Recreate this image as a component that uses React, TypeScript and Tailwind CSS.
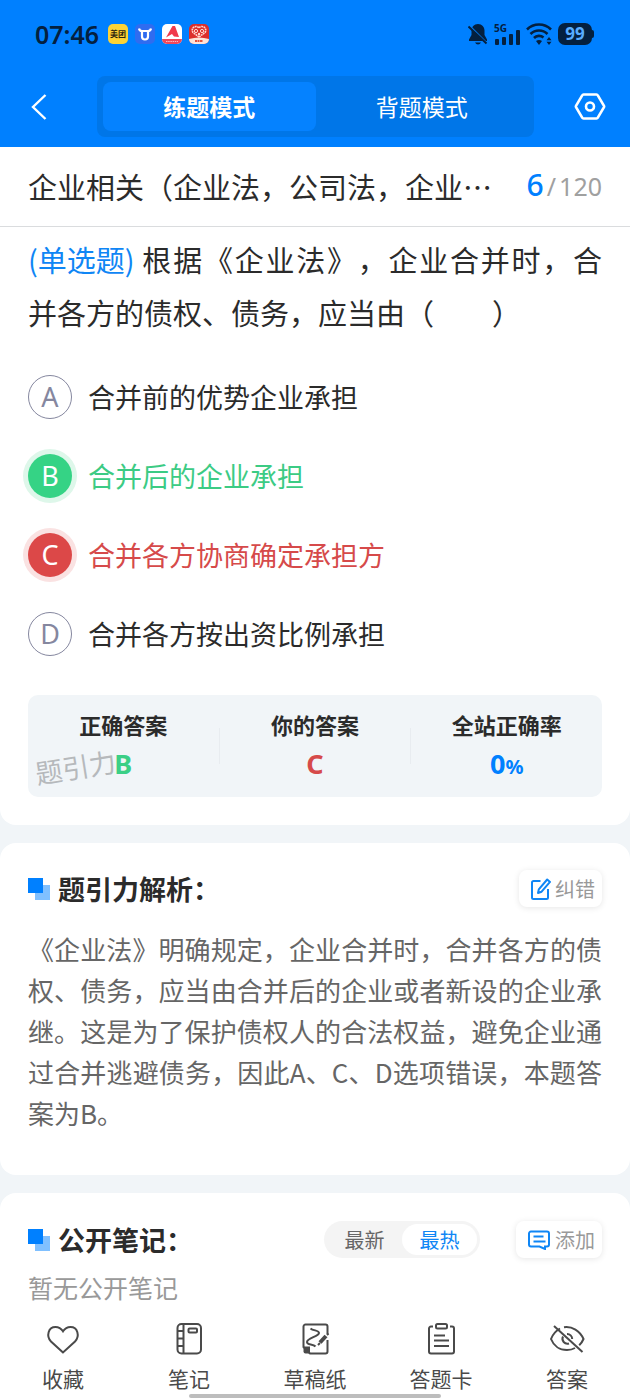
import React from "react";

const options = [
  { key: "A", text: "合并前的优势企业承担", state: "idle" },
  { key: "B", text: "合并后的企业承担", state: "right" },
  { key: "C", text: "合并各方协商确定承担方", state: "wrong" },
  { key: "D", text: "合并各方按出资比例承担", state: "idle" },
];

const circleStyles: Record<string, string> = {
  idle: "border border-[#85879f] text-[#85879f]",
  right: "bg-[#35d385] text-white ring-5 ring-[#def7ea]",
  wrong: "bg-[#dc4848] text-white ring-5 ring-[#fae2e2]",
};

const textStyles: Record<string, string> = {
  idle: "text-[#2b2b2b]",
  right: "text-[#3ccb84]",
  wrong: "text-[#d64a4a]",
};

const StatusBar = () => {
  return (
    <div className="flex items-center justify-between h-[68px] pl-[35px] pr-9 text-[#04203f]">
      <div className="flex items-center gap-[7px]">
        <span className="mr-[2px] font-['Noto_Sans',sans-serif] font-semibold text-[25px] leading-[30px]">
          07:46
        </span>
        <span className="flex items-center justify-center w-5 h-5 rounded-[5px] bg-[#fdd335] text-[8px] leading-[10px] font-bold text-[#2b2410]">
          美团
        </span>
        <svg className="w-5 h-5" viewBox="0 0 20 20" fill="none">
          <rect width="20" height="20" rx="5" fill="#2f6cf0" />
          <path
            d="M7 7v5.500a3 3 0 0 0 6 0V7M4 4.500q0.500 2.500 3 2.500h6q2.500 0 3-2.500"
            stroke="#fff"
            strokeWidth="2.200"
          />
        </svg>
        <svg className="w-5 h-5" viewBox="0 0 20 20" fill="none">
          <rect width="20" height="20" rx="5" fill="#fff" />
          <path d="M0 15h20a5 5 0 0 1-5 5H5a5 5 0 0 1-5-5z" fill="#f0485a" />
          <path d="M10.500 2L4 13.500l6-3.500 2 2.500 5 0.500L13 2z" fill="#f03a4c" />
          <path d="M4 17.500h12" stroke="#fbb8c0" strokeDasharray="1.500 0.700" />
        </svg>
        <svg className="w-5 h-5" viewBox="0 0 20 20" fill="none">
          <rect width="20" height="20" rx="5" fill="#dc2f2c" />
          <path d="M0 15q10-3 20 0a5 5 0 0 1-5 5H5a5 5 0 0 1-5-5z" fill="#fde3d8" />
          <path
            d="M10 13L4 8.500a3.200 3.200 0 0 1 6-4.500 3.200 3.200 0 0 1 6 4.500z"
            stroke="#ffd9d2"
            strokeWidth="1.600"
            strokeDasharray="1.800 0.600"
          />
          <circle cx="7" cy="7" r="1.600" stroke="#ffd9d2" />
          <circle cx="13" cy="7" r="1.600" stroke="#ffd9d2" />
          <circle cx="10" cy="10" r="1.200" fill="#ffd9d2" />
          <path d="M6 17h8" stroke="#e0533f" strokeWidth="2" strokeDasharray="2 0.500" />
        </svg>
      </div>
      <div className="flex items-center gap-[6px]">
        <svg className="w-5 h-[22px]" viewBox="0 0 20 22" fill="none">
          <path
            d="M10 1c-4 0-6.500 3-6.500 6.500v4.500L1 16.500V18h18v-1.500L16.500 12V7.500C16.500 4 14 1 10 1z"
            fill="currentColor"
          />
          <path d="M7 19.500h6q-1 2-3 2t-3-2z" fill="currentColor" />
          <path d="M0 1.500l19 19" stroke="#0080ff" strokeWidth="2" />
          <path d="M0.500 3.500l18 17" stroke="currentColor" strokeWidth="2" />
        </svg>
        <div className="relative flex items-end justify-end gap-[3px] w-[26px] h-[22px]">
          <span className="absolute left-0 top-0 font-['Noto_Sans',sans-serif] font-bold text-[10px] leading-[10px]">
            5G
          </span>
          <span className="w-1 h-[6px] rounded-[1px] bg-[#04203f]" />
          <span className="w-1 h-2 rounded-[1px] bg-[#04203f]" />
          <span className="w-1 h-[11px] rounded-[1px] bg-[#04203f]" />
          <span className="w-1 h-[15px] rounded-[1px] bg-[#04203f]" />
        </div>
        <svg className="w-[26px] h-[22px]" viewBox="0 0 26 22" fill="none">
          <path
            d="M1 6.500a17 17 0 0 1 24 0M4.500 11a12 12 0 0 1 17 0M8 15a7 7 0 0 1 9.500-0.500"
            stroke="currentColor"
            strokeWidth="2.600"
          />
          <path d="M10 18q3-2 6 0l-3 4z" fill="currentColor" />
          <path d="M23 14l2.500 3.200h-5zM23 22l2.500-3.200h-5z" fill="currentColor" />
        </svg>
        <div className="flex items-center">
          <span className="flex items-center justify-center w-[34px] h-[22px] rounded-[7px] bg-[#04203f] font-['Noto_Sans',sans-serif] font-bold text-[17px] leading-[20px] text-[#58acff]">
            99
          </span>
          <span className="w-[2px] h-2 rounded-r-full bg-[#04203f]" />
        </div>
      </div>
    </div>
  );
};

const Header = () => {
  return (
    <header className="bg-[#0080ff] text-white">
      <StatusBar />
      <div className="flex items-center pt-2 pb-[10px]">
        <button aria-label="返回" className="w-[97px] shrink-0 pl-[31px]">
          <svg className="w-4 h-7" viewBox="0 0 16 28" fill="none">
            <path d="M14.500 2L2 14l12.500 12" stroke="currentColor" strokeWidth="2.400" />
          </svg>
        </button>
        <div className="flex flex-1 h-[61px] p-[6px] rounded-lg bg-[#0076e8]">
          <button className="flex-1 pb-[2px] rounded-lg bg-[#0582ff] font-bold text-[23px] leading-[32px]">
            练题模式
          </button>
          <button className="flex-1 pb-[2px] rounded-lg text-[23px] leading-[32px]">
            背题模式
          </button>
        </div>
        <button aria-label="设置" className="flex justify-end w-24 shrink-0 pr-6">
          <svg className="w-8 h-8" viewBox="0 0 32 32" fill="none">
            <path
              d="M9.500 3.500h13a1.500 1.500 0 0 1 1.300 0.800L30 14.800a1.500 1.500 0 0 1 0 1.400L23.800 26.700a1.500 1.500 0 0 1-1.300 0.800h-13a1.500 1.500 0 0 1-1.300-0.800L2 16.200a1.500 1.500 0 0 1 0-1.400L8.200 4.300A1.500 1.500 0 0 1 9.500 3.500z"
              stroke="currentColor"
              strokeWidth="2.600"
            />
            <circle cx="16" cy="15.500" r="4" stroke="currentColor" strokeWidth="2.600" />
          </svg>
        </button>
      </div>
    </header>
  );
};

const SectionTitle = ({ children }: { children: React.ReactNode }) => {
  return (
    <h2 className="flex items-center gap-2 font-bold text-[27px] leading-[37px] text-[#2b2b2b]">
      <svg className="w-[22px] h-[22px]" viewBox="0 0 22 22">
        <rect x="7" y="7" width="15" height="15" fill="#80c0ff" />
        <rect width="15" height="15" fill="#0080ff" />
      </svg>
      {children}
    </h2>
  );
};

const QuestionSection = () => {
  return (
    <section className="rounded-b-2xl bg-white">
      <div className="flex items-center justify-between h-20 px-7 pb-[2px] border-b border-[#dadcde]">
        <h1 className="text-[29px] leading-[40px] text-[#2b2b2b] whitespace-nowrap">
          企业相关（企业法，公司法，企业…
        </h1>
        <p className="font-['Noto_Sans',sans-serif] text-[25px] leading-[40px] text-[#a0a0a0]">
          <span className="font-medium text-[30px] text-[#0080ff]">6</span>
          <span className="mx-[3px]">/</span>120
        </p>
      </div>
      <div className="px-7 pt-[6px] pb-7">
        <p className="text-justify text-[29px] leading-[53px] text-[#2b2b2b] [text-spacing-trim:space-all]">
          <span className="inline-block mr-[6px] text-[#0f86f5]">(单选题)</span>
          根据《企业法》，企业合并时，合并各方的债权、债务，应当由（　　）
        </p>
        <div className="flex flex-col gap-[35px] mt-9">
          {options.map((item) => (
            <label key={item.key} className="flex items-center gap-4">
              <input
                type="radio"
                name="answer"
                value={item.key}
                defaultChecked={item.key === "C"}
                className="sr-only"
              />
              <span
                className={`flex items-center justify-center shrink-0 w-11 h-11 rounded-full font-['Noto_Sans',sans-serif] text-[27px] leading-[30px] ${circleStyles[item.state]}`}
              >
                {item.key}
              </span>
              <span className={`text-[27px] leading-[44px] ${textStyles[item.state]}`}>
                {item.text}
              </span>
            </label>
          ))}
        </div>
        <div className="relative flex items-center mt-[39px] rounded-[10px] bg-[#f1f5f8] text-center">
          <span className="absolute left-[7px] top-[54px] -rotate-9 text-[27px] leading-[36px] text-[#b6b9bc]">
            题引力
          </span>
          <div className="relative flex-1 pt-[14px] pb-[14px]">
            <p className="font-bold text-[22px] leading-[30px] text-[#2b2b2b]">正确答案</p>
            <p className="mt-[6px] font-['Noto_Sans',sans-serif] font-bold text-[27px] leading-[38px] text-[#3bcf86]">
              B
            </p>
          </div>
          <div className="w-px h-9 bg-[#e8ecf0]" />
          <div className="flex-1 pt-[14px] pb-[14px]">
            <p className="font-bold text-[22px] leading-[30px] text-[#2b2b2b]">你的答案</p>
            <p className="mt-[6px] font-['Noto_Sans',sans-serif] font-bold text-[27px] leading-[38px] text-[#d64a4a]">
              C
            </p>
          </div>
          <div className="w-px h-9 bg-[#e8ecf0]" />
          <div className="flex-1 pt-[14px] pb-[14px]">
            <p className="font-bold text-[22px] leading-[30px] text-[#2b2b2b]">全站正确率</p>
            <p className="mt-[6px] font-['Noto_Sans',sans-serif] font-bold text-[27px] leading-[38px] text-[#0080ff]">
              0<span className="text-[20px] leading-[20px]">%</span>
            </p>
          </div>
        </div>
      </div>
    </section>
  );
};

const AnalysisSection = () => {
  return (
    <section className="px-7 pt-[27px] pb-[42px] rounded-2xl bg-white">
      <div className="flex items-center justify-between">
        <SectionTitle>题引力解析：</SectionTitle>
        <button className="flex items-center gap-1 h-[37px] pl-3 pr-[7px] rounded-lg bg-white shadow-[0_1px_6px_rgba(0,0,0,0.1)] text-[20px] leading-[28px] text-[#999999]">
          <svg className="w-5 h-[22px]" viewBox="0 0 20 22" fill="none" stroke="#0f86f5" strokeWidth="2">
            <path d="M9.500 3H2.500A1.500 1.500 0 0 0 1 4.500v15A1.500 1.500 0 0 0 2.500 21h13a1.500 1.500 0 0 0 1.500-1.500V11" />
            <path d="M7 15l0.800-3.600L16.200 1.500l2.800 2.400-8.400 9.800z" strokeLinejoin="round" />
          </svg>
          纠错
        </button>
      </div>
      <p className="mt-[21px] text-justify text-[26px] leading-[41px] text-[#666666] [text-spacing-trim:space-all]">
        《企业法》明确规定，企业合并时，合并各方的债权、债务，应当由合并后的企业或者新设的企业承继。这是为了保护债权人的合法权益，避免企业通过合并逃避债务，因此A、C、D选项错误，本题答案为B。
      </p>
    </section>
  );
};

const NotesSection = () => {
  return (
    <section className="flex-1 px-7 pt-7 rounded-t-2xl bg-white">
      <div className="flex items-center">
        <SectionTitle>公开笔记：</SectionTitle>
        <div className="flex ml-auto mr-9 p-[3px] rounded-full bg-[#f4f4f4] text-[20px] leading-[31px]">
          <button className="w-[75px] rounded-full text-[#666666]">最新</button>
          <button className="w-[75px] rounded-full bg-white text-[#0f86f5]">最热</button>
        </div>
        <button className="flex items-center gap-[5px] h-[37px] pl-3 pr-[7px] rounded-lg bg-white shadow-[0_1px_6px_rgba(0,0,0,0.1)] text-[20px] leading-[28px] text-[#999999]">
          <svg className="w-[22px] h-5" viewBox="0 0 22 20" fill="none" stroke="#0f86f5" strokeWidth="2">
            <path d="M11.500 16.500H3a2 2 0 0 1-2-2v-11a2 2 0 0 1 2-2h16a2 2 0 0 1 2 2v11a2 2 0 0 1-2 2h-2v2.500l-5.500-2.500z" />
            <path d="M5.500 6.500h10M5.500 11.500h12" />
          </svg>
          添加
        </button>
      </div>
      <p className="mt-[11px] text-[25px] leading-[36px] text-[#999999]">暂无公开笔记</p>
    </section>
  );
};

const navItems = [
  {
    label: "收藏",
    icon: (
      <path d="M16 29.500L4 18.500C-1 13 1.200 4 8.500 4c3.500 0 6 2 7.500 4.300C17.500 6 20 4 23.500 4 30.800 4 33 13 28 18.500z" />
    ),
  },
  {
    label: "笔记",
    icon: (
      <>
        <rect x="4.500" y="1" width="23.500" height="29.500" rx="4" />
        <path d="M10.500 1v29.500M4.500 8h6M4.500 15.500h6M4.500 23h6" />
        <rect x="15.500" y="5.500" width="8.500" height="4" rx="1" />
      </>
    ),
  },
  {
    label: "草稿纸",
    icon: (
      <>
        <path d="M28.500 11V3.500a2 2 0 0 0-2-2h-20a2 2 0 0 0-2 2V24l6.500 6.500h15.500a2 2 0 0 0 2-2V17" />
        <path d="M4.500 23.500h6.500v7h-4.500a2 2 0 0 1-2-2z" fill="#4a4a4a" stroke="none" />
        <path d="M11.500 5.500c3 2.500 8.500 1.500 8.500 4.500 0 3.500-12 5-12 9 0 3.500 6 1.500 8.500 4.500" />
        <path d="M21 19.500l6-6.500" strokeWidth="4" />
        <path d="M19 22l2-2M28 12l1.500-1.500" />
      </>
    ),
  },
  {
    label: "答题卡",
    icon: (
      <>
        <path d="M8 3.500H6a2 2 0 0 0-2 2v23a2 2 0 0 0 2 2h21a2 2 0 0 0 2-2v-23a2 2 0 0 0-2-2h-2" />
        <rect x="11" y="1" width="11" height="4.500" rx="1.500" />
        <path d="M9 12.500h11M9 17.500h15M9 23h15" />
      </>
    ),
  },
  {
    label: "答案",
    icon: (
      <>
        <path d="M9 5.500C4.500 8 1.500 12 0 16c2.500 6.500 8.500 11 16 11 3 0 5.800-0.700 8-2M13 4.200c8-1.200 16 3.600 19.500 11.800-1 2.400-2.400 4.500-4.300 6.200" />
        <path d="M12 13.500a5 5 0 0 0 6 7M16 11a5 5 0 0 1 5.200 5" />
        <path d="M3 3l28.500 26" />
      </>
    ),
  },
];

const BottomNav = () => {
  return (
    <nav className="relative flex bg-white pt-[18px] pb-[7px]">
      {navItems.map((item) => (
        <button
          key={item.label}
          className="flex flex-1 flex-col items-center gap-2 text-[21px] leading-[30px] text-[#4a4a4a]"
        >
          <svg
            className="w-8 h-8 overflow-visible"
            viewBox="0 0 32 32"
            fill="none"
            stroke="currentColor"
            strokeWidth="2"
          >
            {item.icon}
          </svg>
          {item.label}
        </button>
      ))}
      <div className="absolute bottom-[2px] left-[30%] w-2/5 h-1 rounded-full bg-[#bdbdbd]" />
    </nav>
  );
};

const App = () => {
  return (
    <div
      lang="zh-CN"
      className="flex flex-col min-h-screen bg-[#f1f5f8] font-['Noto_Sans_CJK_SC',sans-serif]"
    >
      <Header />
      <main className="flex flex-1 flex-col gap-[18px]">
        <QuestionSection />
        <AnalysisSection />
        <NotesSection />
      </main>
      <BottomNav />
    </div>
  );
};

export default App;
